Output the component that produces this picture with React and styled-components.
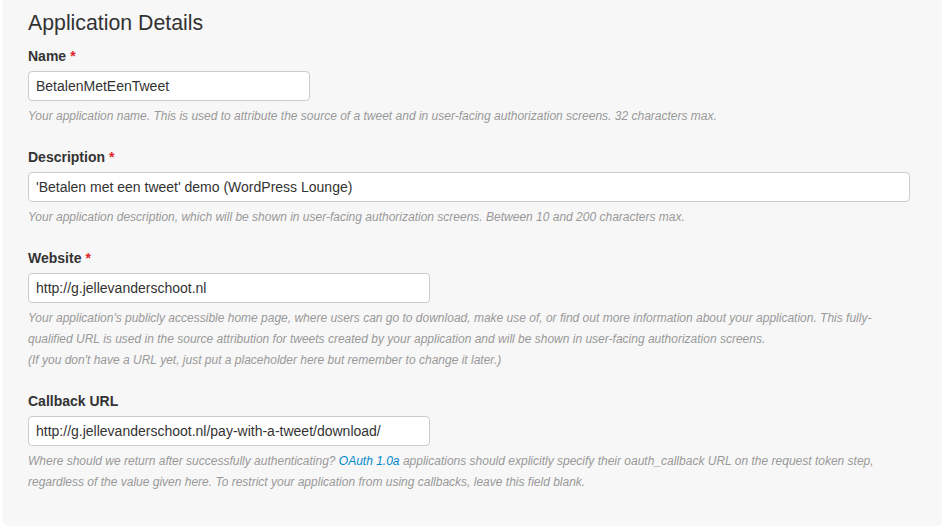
import React from "react";
import styled, { createGlobalStyle } from "styled-components";

const GlobalStyle = createGlobalStyle`
  html, body {
    margin: 0;
    padding: 0;
    background: #ffffff;
    font-family: "Liberation Sans", Arial, sans-serif;
    color: #333333;
  }
`;

const Panel = styled.div`
  box-sizing: border-box;
  margin: 0 3px 0 3px;
  height: 526px;
  padding: 8px 25px 0 25px;
  background: #f7f7f7;
  border-radius: 0 0 5px 5px;
  display: flex;
  flex-direction: column;
`;

const Title = styled.h3`
  margin: 0 0 8px 0;
  font-size: 21.3px;
  line-height: 30px;
  font-weight: 400;
  color: #333333;
`;

const Field = styled.div`
  display: flex;
  flex-direction: column;
  align-items: flex-start;
  margin-bottom: 20px;
`;

const Label = styled.label`
  font-size: 14px;
  line-height: 20px;
  font-weight: 700;
  color: #333333;
  margin-bottom: 5px;
`;

const Required = styled.span`
  color: #e0262b;
  margin-left: 4px;
`;

const Input = styled.input`
  box-sizing: border-box;
  width: ${(p) => p.$width}px;
  height: 30px;
  padding: 4px 7px;
  border: 1px solid #cccccc;
  border-radius: 4px;
  background: #ffffff;
  font-family: "Liberation Sans", Arial, sans-serif;
  font-size: 14px;
  color: #333333;
  outline: none;
`;

const Help = styled.p`
  margin: 5px 0 0 0;
  font-size: 12px;
  line-height: 21px;
  font-style: italic;
  color: #999999;
`;

const Link = styled.a`
  color: #0088cc;
  text-decoration: none;
`;

export default function App() {
  return (
    <>
      <GlobalStyle />
      <Panel>
        <Title>Application Details</Title>

        <Field>
          <Label>
            Name<Required>*</Required>
          </Label>
          <Input $width={282} defaultValue="BetalenMetEenTweet" />
          <Help>
            Your application name. This is used to attribute the source of a tweet and in user-facing authorization screens. 32 characters max.
          </Help>
        </Field>

        <Field>
          <Label>
            Description<Required>*</Required>
          </Label>
          <Input $width={882} defaultValue="'Betalen met een tweet' demo (WordPress Lounge)" />
          <Help>
            Your application description, which will be shown in user-facing authorization screens. Between 10 and 200 characters max.
          </Help>
        </Field>

        <Field>
          <Label>
            Website<Required>*</Required>
          </Label>
          <Input $width={402} defaultValue="http://g.jellevanderschoot.nl" />
          <Help>
            Your application's publicly accessible home page, where users can go to download, make use of, or find out more information about your application. This fully-
            <br />
            qualified URL is used in the source attribution for tweets created by your application and will be shown in user-facing authorization screens.
            <br />
            (If you don't have a URL yet, just put a placeholder here but remember to change it later.)
          </Help>
        </Field>

        <Field>
          <Label>Callback URL</Label>
          <Input $width={402} defaultValue="http://g.jellevanderschoot.nl/pay-with-a-tweet/download/" />
          <Help>
            Where should we return after successfully authenticating? <Link href="#">OAuth 1.0a</Link> applications should explicitly specify their oauth_callback URL on the request token step,
            <br />
            regardless of the value given here. To restrict your application from using callbacks, leave this field blank.
          </Help>
        </Field>
      </Panel>
    </>
  );
}
